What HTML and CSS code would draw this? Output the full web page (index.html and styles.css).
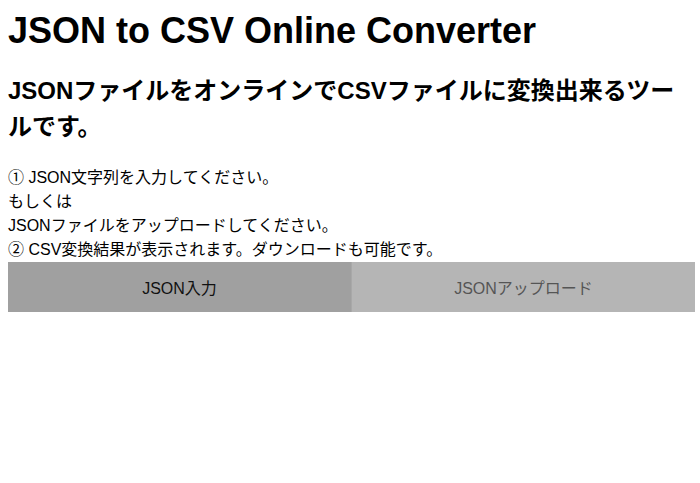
FILE: index.html
```html
<!DOCTYPE html>
<html lang="ja">
<head>
<meta charset="utf-8">
<title>JSON to CSV Online Converter</title>
<link rel="stylesheet" href="styles.css">
</head>
<body>
<div class="page">
  <h1 class="title">JSON to CSV Online Converter</h1>
  <h2 class="subtitle">JSONファイルをオンラインでCSVファイルに変換出来るツールです。</h2>
  <p class="steps">① JSON文字列を入力してください。<br>もしくは<br>JSONファイルをアップロードしてください。<br>② CSV変換結果が表示されます。ダウンロードも可能です。</p>
  <div class="tabs">
    <div class="tab tab-active">JSON入力</div>
    <div class="tab tab-inactive">JSONアップロード</div>
  </div>
</div>
</body>
</html>
```
FILE: styles.css
```css
html, body {
  margin: 0;
  padding: 0;
  background: #fff;
}
body {
  font-family: "Liberation Sans", "Noto Sans CJK JP", sans-serif;
  color: #000;
}
.page {
  padding: 9px 5px 0 8px;
}
.title {
  margin: 0;
  font-size: 36px;
  line-height: 44px;
  font-weight: bold;
  white-space: nowrap;
}
.subtitle {
  margin: 20px 0 0;
  font-size: 24px;
  line-height: 36px;
  font-weight: bold;
}
.steps {
  margin: 21px 0 0;
  font-size: 16px;
  line-height: 24px;
}
.tabs {
  display: flex;
  height: 50px;
}
.tab {
  flex: 1 1 0;
  display: flex;
  align-items: center;
  justify-content: center;
  font-size: 16px;
}
.tab-active {
  background: #a0a0a0;
  color: #111;
}
.tab-inactive {
  background: #b5b5b5;
  color: #555;
  border-left: 1px solid #a8a8a8;
}
```
